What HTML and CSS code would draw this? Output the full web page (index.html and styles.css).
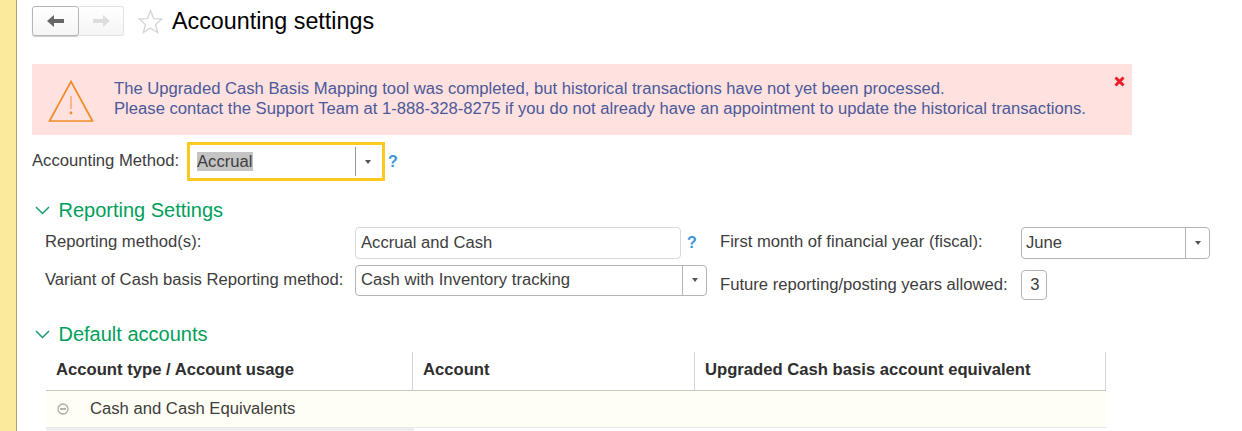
FILE: index.html
```html
<!doctype html>
<html lang="en">
	<head>
		<meta charset="utf-8">
		<title>Accounting settings</title>
		<link rel="stylesheet" href="styles.css">
	</head>
	<body>
		<aside class="side"></aside>
		<main class="page">
			<div class="toolbar">
				<div class="nav">
					<div class="nav-btn nav-back">
						<svg width="18" height="14" viewBox="0 0 18 14"><path d="M0 7 7 1V5H17V9H7V13Z" fill="#666"/></svg>
					</div>
					<div class="nav-btn nav-next">
						<svg width="18" height="14" viewBox="0 0 18 14"><path d="M18 7 11 1V5H1V9H11V13Z" fill="#ddd"/></svg>
					</div>
				</div>
				<svg class="star" width="25" height="25" viewBox="0 0 25 25"><path d="M12.5 1.5 15.6 9.6 24 10 17.5 15.4 19.6 23.5 12.5 19 5.4 23.5 7.5 15.4 1 10 9.4 9.6Z" fill="none" stroke="#d6d6d6" stroke-width="1.4"/></svg>
				<h1 class="title">Accounting settings</h1>
			</div>

			<div class="alert">
				<svg class="alert-icon" width="46" height="44" viewBox="0 0 46 44"><path d="M23 2.5 44.5 42H1.5Z" fill="none" stroke="#f28c28" stroke-width="1.7"/><path d="M23 17V30" stroke="#f28c28" stroke-width="1"/><circle cx="23" cy="34" r="1.4" fill="#f28c28"/></svg>
				<p class="alert-text">The Upgraded Cash Basis Mapping tool was completed, but historical transactions have not yet been processed.<br>Please contact the Support Team at 1-888-328-8275 if you do not already have an appointment to update the historical transactions.</p>
				<svg class="alert-close" width="11" height="11" viewBox="0 0 11 11"><path d="M1.5 1.5 9.5 9.5M9.5 1.5 1.5 9.5" stroke="#ee1c25" stroke-width="3"/></svg>
			</div>

			<div class="method">
				<span class="method-label">Accounting Method:</span>
				<div class="method-box">
					<span class="method-value"><span class="selected">Accrual</span></span>
					<span class="method-arrow"><i class="caret"></i></span>
				</div>
				<span class="help">?</span>
			</div>

			<h2 class="section"><svg width="15" height="9" viewBox="0 0 15 9"><path d="M1 1 7.5 7.5 14 1" fill="none" stroke="#1b9e6b" stroke-width="1.5"/></svg>Reporting Settings</h2>
			<div class="settings">
				<div class="col-left">
					<div class="row row-first">
						<span class="label label-left">Reporting method(s):</span>
						<div class="field field-method">Accrual and Cash</div>
						<span class="help help-field">?</span>
					</div>
					<div class="row">
						<span class="label label-left label-variant">Variant of Cash basis Reporting method:</span>
						<div class="field field-variant">
							<span class="field-value">Cash with Inventory tracking</span>
							<span class="field-arrow"><i class="caret"></i></span>
						</div>
					</div>
				</div>
				<div class="col-right">
					<div class="row row-first">
						<span class="label label-right">First month of financial year (fiscal):</span>
						<div class="field field-month">
							<span class="field-value">June</span>
							<span class="field-arrow"><i class="caret"></i></span>
						</div>
					</div>
					<div class="row">
						<span class="label label-right label-years">Future reporting/posting years allowed:</span>
						<div class="field field-years">3</div>
					</div>
				</div>
			</div>

			<h2 class="section section-accounts"><svg width="15" height="9" viewBox="0 0 15 9"><path d="M1 1 7.5 7.5 14 1" fill="none" stroke="#1b9e6b" stroke-width="1.5"/></svg>Default accounts</h2>
			<div class="table">
				<div class="thead">
					<div class="th th-type">Account type / Account usage</div>
					<div class="th th-account">Account</div>
					<div class="th th-upgraded">Upgraded Cash basis account equivalent</div>
				</div>
				<div class="group-row">
					<svg class="collapse" width="12" height="12" viewBox="0 0 12 12"><circle cx="6" cy="6" r="5" fill="none" stroke="#aaa" stroke-width="1.3"/><path d="M3 6H9" stroke="#888" stroke-width="1.3"/></svg>
					<span>Cash and Cash Equivalents</span>
				</div>
				<div class="next-row"></div>
			</div>
		</main>
	</body>
</html>
```

FILE: styles.css
```css
html, body {
	margin: 0;
	height: 100%;
}

body {
	display: flex;
	overflow: hidden;
	background-color: #fff;
	font-family: "Liberation Sans", Arial, sans-serif;
	font-size: 16.65px;
	color: #3d3d3d;
}

.side {
	flex: 0 0 16px;
	background-color: #fbe99c;
	border-right: 1px solid #aba26c;
}

.page {
	flex: 1;
	padding: 6px 0 0 15px;
	min-width: 0;
}

/* top bar */
.toolbar {
	display: flex;
	align-items: flex-start;
	height: 58px;
}

.nav {
	display: flex;
	width: 92px;
	height: 30px;
	box-sizing: border-box;
}

.nav-btn {
	display: flex;
	align-items: center;
	justify-content: center;
	box-sizing: border-box;
	height: 30px;
	background: linear-gradient(#fff, #f5f5f5);
}

.nav-back {
	width: 47px;
	border: 1px solid #b5b5b5;
	border-radius: 3px;
	box-shadow: 0 1px 1px #ccc;
}

.nav-next {
	width: 45px;
	border: 1px solid #e2e2e2;
	border-left: 0;
	border-radius: 0 3px 3px 0;
}

.star {
	margin: 3px 0 0 14px;
}

.title {
	margin: 0 0 0 9px;
	font-size: 23.3px;
	font-weight: normal;
	line-height: 30px;
	color: #000;
}

/* warning */
.alert {
	display: flex;
	width: 1100px;
	height: 71px;
	box-sizing: border-box;
	padding: 15px 7px 0 16px;
	background-color: #ffe1df;
}

.alert-icon {
	flex: none;
}

.alert-text {
	flex: 1;
	margin: 0 0 0 20px;
	line-height: 20px;
	color: #4b5a9a;
}

.alert-close {
	flex: none;
	margin-top: -3px;
}

/* accounting method */
.method {
	display: flex;
	align-items: center;
	height: 39px;
	margin-top: 7px;
}

.method-label {
	width: 155px;
	padding-bottom: 2px;
}

.method-box {
	display: flex;
	width: 198px;
	height: 39px;
	box-sizing: border-box;
	border: 3px solid #fdc91f;
	padding: 2px 0 2px 7px;
}

.method-value {
	flex: 1;
	line-height: 30px;
}

.selected {
	background-color: #c4c4c4;
}

.method-arrow {
	display: flex;
	align-items: center;
	justify-content: center;
	width: 24px;
	margin-right: 2px;
	border-left: 1px solid #999;
}

.caret {
	display: block;
	width: 0;
	height: 0;
	border-left: 3.5px solid transparent;
	border-right: 3.5px solid transparent;
	border-top: 4px solid #555;
}

.help {
	margin-left: 3px;
	font-weight: bold;
	font-size: 16px;
	color: #3d94d6;
}

/* sections */
.section {
	display: flex;
	align-items: center;
	margin: 17px 0 0 3px;
	font-size: 20px;
	font-weight: normal;
	line-height: 24px;
	color: #00a05a;
}

.section svg {
	margin-right: 8.5px;
}

.section-accounts {
	margin-top: 21px;
}

.settings {
	display: flex;
	margin: 5px 0 0 13px;
}

.col-left {
	width: 675px;
}

.row {
	display: flex;
	align-items: center;
	height: 32px;
	margin-bottom: 5px;
}

.label {
	flex: none;
	padding-bottom: 2px;
}

.label-left {
	width: 310px;
}

.label-right {
	width: 301px;
}

.label-variant {
	padding-bottom: 0;
}

.label-years {
	padding-bottom: 0;
	padding-top: 10px;
}

.field {
	box-sizing: border-box;
	display: flex;
	align-items: center;
	border: 1px solid #b4b4b4;
	border-radius: 4px;
	color: #3d3d3d;
	padding-left: 5px;
	background-color: #fff;
}

.field-method {
	width: 326px;
	height: 32px;
	border-color: #d8d8d8;
}

.field-variant {
	width: 352px;
	height: 31px;
}

.field-month {
	width: 189px;
	height: 32px;
	padding-left: 4px;
}

.field-years {
	width: 26px;
	height: 30px;
	justify-content: center;
	padding-left: 2px;
	margin-top: 10px;
}

.field-value {
	flex: 1;
}

.field-arrow {
	display: flex;
	align-items: center;
	justify-content: center;
	width: 23px;
	align-self: stretch;
	border-left: 1px solid #b4b4b4;
}

.help-field {
	margin-left: 6px;
}

/* table */
.table {
	width: 1060px;
	margin: 6px 0 0 14px;
}

.thead {
	display: flex;
	height: 39px;
	border-bottom: 1px solid #c8c8c8;
	box-sizing: border-box;
}

.th {
	box-sizing: border-box;
	padding: 0 10px;
	line-height: 36px;
	font-weight: bold;
	color: #2e2e2e;
	border-right: 1px solid #d4d4d4;
}

.th-type {
	width: 367px;
}

.th-account {
	width: 282px;
}

.th-upgraded {
	width: 411px;
}

.group-row {
	display: flex;
	align-items: center;
	height: 37px;
	background-color: #fffef5;
	border-bottom: 1px solid #e8e8e8;
	box-sizing: border-box;
}

.collapse {
	margin: 0 21px 0 11px;
}

.next-row {
	height: 10px;
	width: 368px;
	background-color: #eee;
}
```
